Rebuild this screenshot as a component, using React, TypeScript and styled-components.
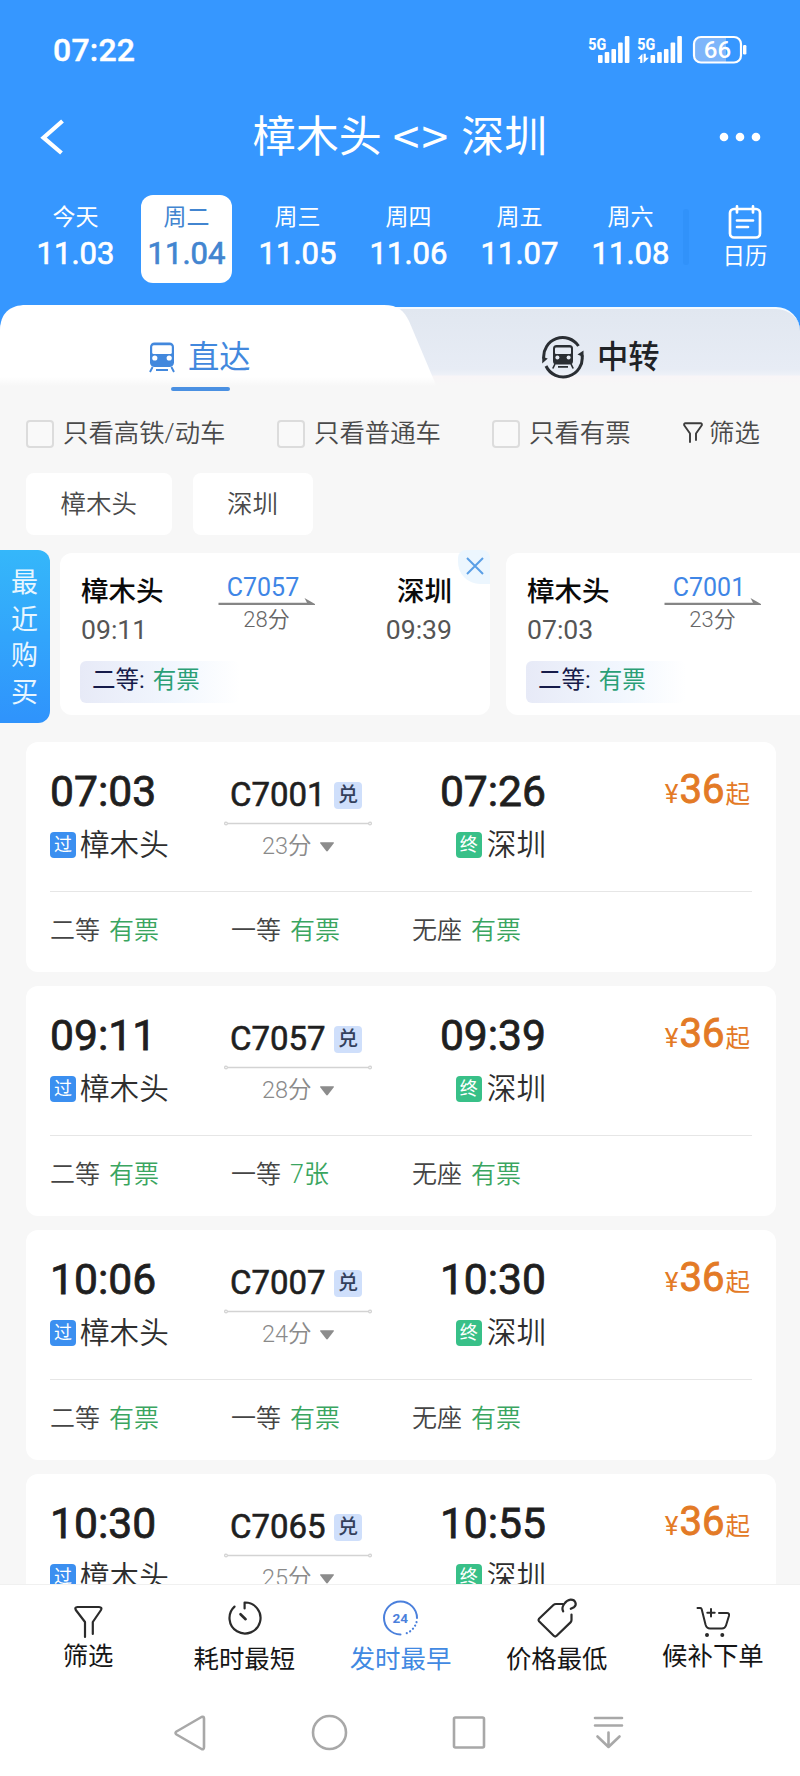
import React from "react";
import styled, { createGlobalStyle } from "styled-components";

const GlobalStyle = createGlobalStyle`
  * { box-sizing: border-box; }
  body {
    margin: 0;
    background: #f7f7f7;
    font-family: Roboto, "Noto Sans CJK SC", sans-serif;
    color: #222;
  }
  svg { display: block; flex: none; }
`;

const Screen = styled.div`
  width: 800px;
  height: 1776px;
  overflow: hidden;
  display: flex;
  flex-direction: column;
  background: #f7f7f7;
`;

/* ---------- header ---------- */

const Header = styled.header`
  background: #3697ff;
  color: #fff;
  flex: none;
`;

const StatusBar = styled.div`
  height: 98px;
  padding: 1px 52px 0 53px;
  display: flex;
  align-items: center;
  justify-content: space-between;
`;

const Clock = styled.span`
  font-size: 32px;
  font-weight: 500;
  line-height: 40px;
  letter-spacing: 0.2px;
  -webkit-text-stroke: 0.4px currentColor;
`;

const StatusIcons = styled.div`
  display: flex;
  align-items: center;
`;

const TitleBar = styled.div`
  height: 76px;
  padding: 1px 38px 0;
  display: grid;
  grid-template-columns: 60px 1fr 60px;
  align-items: center;
`;

const MoreWrap = styled.div`
  display: flex;
  justify-content: flex-end;
`;

const Title = styled.h1`
  margin: 0;
  padding-top: 1px;
  font-size: 43px;
  font-weight: 400;
  line-height: 60px;
  text-align: center;
  white-space: nowrap;
  display: flex;
  justify-content: center;
  gap: 11px;
`;

const Swap = styled.span`
  margin-top: -3px;
  font-size: 48px;
  letter-spacing: 2px;
  font-family: "Noto Sans CJK SC", sans-serif;
`;

const DateBar = styled.div`
  height: 131px;
  padding: 21px 0 0 20px;
  display: flex;
`;

const DateCell = styled.div<{ $active?: boolean }>`
  width: 91px;
  height: 88px;
  margin: 0 10px;
  padding-top: 7px;
  border-radius: 12px;
  display: flex;
  flex-direction: column;
  align-items: center;
  background: ${(p) => (p.$active ? "#fff" : "transparent")};
  color: ${(p) => (p.$active ? "#4285d0" : "#fff")};
`;

const Weekday = styled.span`
  font-size: 23px;
  line-height: 32px;
`;

const DayNumber = styled.span`
  font-size: 31px;
  font-weight: 400;
  line-height: 39px;
  -webkit-text-stroke: 0.7px currentColor;
`;

const DateShade = styled.div`
  width: 6px;
  height: 56px;
  margin: 14px 0 0 -3px;
  border-radius: 3px;
  background: #3192fa;
`;

const CalendarButton = styled.div`
  width: 60px;
  margin-left: 26px;
  padding-top: 10px;
  display: flex;
  flex-direction: column;
  align-items: center;
  font-size: 22.5px;
  line-height: 32px;
`;

/* ---------- tabs ---------- */

const TabsWrap = styled.div`
  flex: none;
  height: 90px;
  background: linear-gradient(#3697ff 50%, #f7f7f7 50%);
`;

const Tabs = styled.div`
  position: relative;
  height: 90px;
  display: grid;
  grid-template-columns: 400px 400px;
  &::before {
    content: "";
    position: absolute;
    inset: 2px 0 0 0;
    border-radius: 24px 24px 0 0;
    border-top: 2px solid #f4faff;
    background: linear-gradient(#e1e7f0 0, #e7ecf5 60px, #eef1f8 66px, #f8f5f7 67px, #f7f7f7 76px);
  }
  &::after {
    content: "";
    position: absolute;
    left: 0;
    top: 0;
    width: 440px;
    height: 82px;
    background: linear-gradient(#fff 72px, #f7f7f7 81px);
    clip-path: path("M0 82 V26 C0 8 10 0 26 0 H384 C398 0 404 6 409 16 L436 80 V82 Z");
  }
`;

const Tab = styled.div<{ $active?: boolean }>`
  position: relative;
  z-index: 1;
  height: 90px;
  padding: ${(p) => (p.$active ? "33px 0 0 149px" : "33px 0 0 141px")};
  display: flex;
  align-items: flex-start;
  gap: ${(p) => (p.$active ? "13px" : "12px")};
  font-size: 31.3px;
  font-weight: ${(p) => (p.$active ? 400 : 500)};
  line-height: 40px;
  color: ${(p) => (p.$active ? "#4288dd" : "#1f2226")};
  ${(p) =>
    p.$active &&
    `&::after {
      content: "";
      position: absolute;
      left: 171px;
      top: 82px;
      width: 59px;
      height: 4px;
      border-radius: 2px;
      background: #4a90e2;
    }`}
`;

const TabIcon = styled.span<{ $top: number }>`
  margin-top: ${(p) => p.$top}px;
`;

/* ---------- filters ---------- */

const Filters = styled.div`
  flex: none;
  height: 78px;
  padding: 0 40px 0 26px;
  display: flex;
  align-items: center;
  font-size: 25.4px;
  font-weight: 350;
  line-height: 36px;
  color: #4a4a4a;
  white-space: nowrap;
`;

const CheckItem = styled.div<{ $width: number }>`
  width: ${(p) => p.$width}px;
  display: flex;
  align-items: center;
  gap: 9px;
`;

const Checkbox = styled.span`
  width: 28px;
  height: 28px;
  flex: none;
  border: 2px solid #dcdcdc;
  border-radius: 4px;
  background: #f9f9f9;
`;

const FilterText = styled.span`
  margin-top: -2px;
`;

const FilterButton = styled.div`
  display: flex;
  align-items: center;
  gap: 6px;
  margin-top: -2px;
`;

const Chips = styled.div`
  flex: none;
  display: flex;
  gap: 21px;
  padding-left: 26px;
`;

const Chip = styled.div`
  height: 62px;
  padding: 0 34.5px;
  border-radius: 8px;
  background: #fff;
  font-size: 25.5px;
  font-weight: 350;
  line-height: 62px;
  color: #4a4a4a;
`;

/* ---------- recent purchases ---------- */

const Recent = styled.section`
  flex: none;
  height: 173px;
  margin-top: 15px;
  display: flex;
  overflow: hidden;
`;

const RecentTag = styled.div`
  width: 50px;
  flex: none;
  padding: 15px 0 0 11px;
  border-radius: 0 12px 12px 0;
  background: linear-gradient(#35b7fa, #2f93fc);
  color: #e8f6ff;
  font-size: 27px;
  line-height: 36.7px;
  display: flex;
  flex-direction: column;
`;

const RecentCard = styled.article<{ $gap: number }>`
  position: relative;
  width: 430px;
  height: 162px;
  flex: none;
  margin: 3px 0 0 ${(p) => p.$gap}px;
  padding: 19px 38px 0 21px;
  border-radius: 12px;
  background: #fff;
`;

const RecentRoute = styled.div`
  display: flex;
  justify-content: space-between;
  height: 89px;
`;

const RecentStop = styled.div<{ $end?: boolean }>`
  width: 137px;
  display: flex;
  flex-direction: column;
  align-items: ${(p) => (p.$end ? "flex-end" : "flex-start")};
`;

const RecentStation = styled.span`
  font-size: 27.5px;
  font-weight: 500;
  line-height: 40px;
  color: #0a0a0a;
`;

const RecentTime = styled.span`
  font-size: 26.6px;
  font-weight: 400;
  line-height: 36px;
  color: #555;
`;

const RecentTrain = styled.div`
  width: 96px;
  display: flex;
  flex-direction: column;
  align-items: center;
  font-size: 22px;
  font-weight: 350;
  line-height: 28px;
  color: #666;
`;

const RecentCode = styled.span`
  font-size: 25px;
  font-weight: 400;
  line-height: 31px;
  margin: 0 0 -6px -7px;
  color: #3f86e6;
`;

const RecentSeat = styled.div`
  width: 160px;
  height: 42px;
  margin-left: -1px;
  padding-left: 12px;
  border-radius: 6px;
  background: linear-gradient(90deg, #e7eaf7, #f2f7fe 60%, #fff);
  display: flex;
  gap: 8px;
  font-size: 23.5px;
  line-height: 39px;
  color: #161b4a;
`;

const RecentStatus = styled.span`
  color: #2a9f76;
`;

const CloseBadge = styled.div`
  position: absolute;
  right: 0;
  top: -3px;
  width: 32px;
  height: 34px;
  border-radius: 8px 8px 0 22px;
  background: #ecf6fe;
  display: flex;
  align-items: center;
  justify-content: center;
  padding: 0 0 2px 2px;
`;

/* ---------- train list ---------- */

const TrainList = styled.main`
  flex: none;
  height: 842px;
  margin-top: 19px;
  padding: 0 24px 0 26px;
  overflow: hidden;
  display: flex;
  flex-direction: column;
  gap: 14px;
`;

const TrainCard = styled.article`
  flex: none;
  height: 230px;
  padding: 0 24px;
  border-radius: 12px;
  background: #fff;
`;

const Trip = styled.div`
  height: 149px;
  display: grid;
  grid-template-columns: 174px 148px 174px 1fr;
`;

const StopColumn = styled.div<{ $end?: boolean }>`
  padding-top: 24px;
  display: flex;
  flex-direction: column;
  gap: 9px;
  align-items: ${(p) => (p.$end ? "flex-end" : "flex-start")};
`;

const StopTime = styled.span`
  font-size: 42.6px;
  font-weight: 400;
  line-height: 50px;
  color: #1f1f1f;
  -webkit-text-stroke: 0.8px currentColor;
`;

const StopName = styled.div<{ $gap: number }>`
  display: flex;
  align-items: center;
  gap: ${(p) => p.$gap}px;
  font-size: 29.6px;
  font-weight: 350;
  line-height: 40px;
  color: #2e2e2e;
`;

const StopBadge = styled.span<{ $tone: string }>`
  width: 26px;
  height: 26px;
  border-radius: 4px;
  background: ${(p) => p.$tone};
  color: #fff;
  font-size: 18px;
  font-weight: 400;
  line-height: 26px;
  text-align: center;
`;

const TrainColumn = styled.div`
  padding-top: 33px;
  display: flex;
  flex-direction: column;
`;

const CodeRow = styled.div`
  height: 40px;
  padding-left: 6px;
  display: flex;
  align-items: center;
`;

const Code = styled.span`
  width: 104px;
  font-size: 33px;
  font-weight: 400;
  line-height: 40px;
  color: #1f1f1f;
  -webkit-text-stroke: 0.6px currentColor;
`;

const Redeem = styled.span`
  width: 28px;
  height: 27px;
  border-radius: 4px;
  background: #cfdffb;
  color: #33405c;
  font-size: 20px;
  font-weight: 500;
  line-height: 26px;
  text-align: center;
`;

const Duration = styled.div`
  height: 32px;
  padding-left: 38px;
  display: flex;
  align-items: center;
  gap: 7px;
  font-size: 23.5px;
  font-weight: 350;
  line-height: 32px;
  color: #8a8a8a;
`;

const Price = styled.div`
  padding: 23px 2px 0 0;
  display: flex;
  justify-content: flex-end;
  align-items: baseline;
  height: 78px;
  font-size: 24.5px;
  line-height: 50px;
  color: #e37a26;
`;

const Yen = styled.span`
  font-size: 26px;
  margin-right: 1px;
`;

const Amount = styled.span`
  font-size: 40px;
  font-weight: 400;
  margin-right: 1px;
  line-height: 50px;
  -webkit-text-stroke: 0.9px currentColor;
`;

const Seats = styled.div`
  height: 78px;
  border-top: 1px solid #e6e6e6;
  display: grid;
  grid-template-columns: 181px 181px 1fr;
  font-size: 25px;
  font-weight: 350;
  line-height: 77px;
  color: #454545;
`;

const Seat = styled.div`
  display: flex;
  gap: 9px;
`;

const SeatStatus = styled.span`
  color: #3aa560;
`;

/* ---------- bottom ---------- */

const SortBar = styled.nav`
  flex: none;
  height: 112px;
  padding: 11px 9px 0 10px;
  border-top: 1px solid #f0f0f0;
  background: #fff;
  display: grid;
  grid-template-columns: repeat(5, 1fr);
`;

const SortItem = styled.div<{ $active?: boolean }>`
  display: flex;
  flex-direction: column;
  align-items: center;
  color: ${(p) => (p.$active ? "#4189e2" : "#161616")};
`;

const SortLabel = styled.span<{ $offset: number }>`
  margin-top: ${(p) => p.$offset}px;
  font-size: 25.4px;
  font-weight: 400;
  line-height: 36px;
`;

const SystemNav = styled.div`
  flex: none;
  height: 80px;
  padding: 17px 0 0 170px;
  background: #fff;
  display: flex;
  gap: 99.7px;
`;

/* ---------- icons ---------- */

const SignalIcon = ({ arrows }: { arrows?: boolean }) => {
  const x = arrows ? 13.5 : 10;
  const tops = [20, 17, 14, 7.5, 1];
  return (
    <svg width={arrows ? 55 : 49} height="30" viewBox={`0 0 ${arrows ? 55 : 49} 30`} fill="#fff">
      <text x="0.3" y="14.5" fontSize="17" fontWeight="800" textLength="18" lengthAdjust="spacingAndGlyphs">
        5G
      </text>
      {tops.map((top, i) => (
        <rect key={i} x={x + i * 6.7} y={top} width="4.6" height={28 - top} rx="1" />
      ))}
      {arrows && <path d="M0.6 24 L5.4 18.8 V28 H3.2 V24 Z M6.6 18.8 H8.8 V22.8 H12 L6.6 28 Z" />}
    </svg>
  );
};

const BatteryIcon = () => (
  <svg width="56" height="30" viewBox="0 0 56 30">
    <path d="M9 3 H34 V27 H9 Q3 27 3 21 V9 Q3 3 9 3 Z" fill="#7db5fa" />
    <rect x="2" y="2" width="47" height="25.5" rx="7" fill="none" stroke="#fff" strokeWidth="2.2" />
    <rect x="51" y="10" width="3.4" height="9.5" rx="1.2" fill="#fff" />
    <text x="25.5" y="23" textAnchor="middle" fontSize="24" fontWeight="500" fill="#fff">
      66
    </text>
  </svg>
);

const BackIcon = () => (
  <svg width="30" height="40" viewBox="0 0 30 40" fill="none" stroke="#fff" strokeWidth="4.2">
    <path d="M24.5 4 L5.5 20.7 L23.5 36" />
  </svg>
);

const MoreIcon = () => (
  <svg width="44" height="10" viewBox="0 0 44 10" fill="#fff">
    <circle cx="6" cy="5" r="4.3" />
    <circle cx="22" cy="5" r="4.3" />
    <circle cx="38" cy="5" r="4.3" />
  </svg>
);

const CalendarIcon = () => (
  <svg width="36" height="35" viewBox="0 0 36 35" fill="none" stroke="#fff" strokeWidth="2.7" strokeLinecap="round">
    <rect x="3" y="4" width="30" height="28.5" rx="4" />
    <path d="M10 1.4 V7.5 M26 1.4 V7.5 M10 15.5 H26 M10 22 H21" />
  </svg>
);

const TrainIcon = () => (
  <svg width="26" height="31" viewBox="0 0 26 31">
    <rect x="1" y="0.5" width="24" height="24.5" rx="4.5" fill="#4288dd" />
    <rect x="3.2" y="3.2" width="19.6" height="8.8" rx="1.5" fill="#fff" />
    <circle cx="5.8" cy="16" r="2.6" fill="#fff" />
    <circle cx="20.2" cy="16" r="2.6" fill="#fff" />
    <path d="M3.6 25 L1 30 M22.4 25 L25 30 M7 28 H19" stroke="#4288dd" strokeWidth="1.9" />
  </svg>
);

const TransferIcon = () => (
  <svg width="44" height="44" viewBox="0 0 44 44">
    <g fill="none" stroke="#2a2e33" strokeWidth="3">
      <path d="M2.8 23.5 A19 19 0 0 1 37.5 11" />
      <path d="M41 20 A19 19 0 0 1 5 31" />
    </g>
    <path d="M1.3 22 L1.2 28.5 L6.8 23.5 Z M42.5 15.5 L42.5 22 L36.5 19.5 Z" fill="#2a2e33" />
    <rect x="12" y="10" width="20" height="19.5" rx="3.5" fill="#2a2e33" />
    <rect x="14" y="12.5" width="16" height="6.5" rx="1" fill="#e6ebf4" />
    <circle cx="16.4" cy="22.4" r="2" fill="#e6ebf4" />
    <circle cx="27.6" cy="22.4" r="2" fill="#e6ebf4" />
    <path d="M14 29 L11.8 33.5 M30 29 L32.2 33.5 M17 31.8 H27" stroke="#2a2e33" strokeWidth="1.7" />
  </svg>
);

const SmallFunnelIcon = () => (
  <svg width="20" height="22" viewBox="0 0 20 22" fill="none" stroke="#3c3c3c" strokeWidth="1.9" strokeLinecap="round" strokeLinejoin="round">
    <path d="M7 20 V11.5 L1.2 3.2 Q0.8 1.3 2.5 1.2 H17.5 Q19.2 1.3 18.8 3.2 L13 11.5 V18" />
  </svg>
);

const HalfArrow = () => (
  <svg width="97" height="9" viewBox="0 0 97 9">
    <path d="M0.5 5.8 H89 L86.5 1 L97 7 V8 H0.5 Z" fill="#858585" />
  </svg>
);

const CloseIcon = () => (
  <svg width="18" height="18" viewBox="0 0 18 18" stroke="#5a9fe6" strokeWidth="2">
    <path d="M1 1 L17 17 M17 1 L1 17" />
  </svg>
);

const RouteLine = () => (
  <svg width="148" height="15" viewBox="0 0 148 15" fill="none" stroke="#d3d3d3" strokeWidth="1.3">
    <path d="M3.5 8.5 H144.5" />
    <circle cx="2" cy="8.5" r="1.4" />
    <circle cx="146" cy="8.5" r="1.4" />
  </svg>
);

const DownTriangle = () => (
  <svg width="16" height="11" viewBox="0 0 16 11">
    <path d="M1.8 1.2 H14.2 Q15.6 1.2 14.6 2.6 L9 9.8 Q8 11 7 9.8 L1.4 2.6 Q0.4 1.2 1.8 1.2 Z" fill="#8c8c8c" />
  </svg>
);

const sortIconProps = {
  width: 44,
  height: 44,
  viewBox: "0 0 44 44",
  fill: "none",
  stroke: "#2b2b2b",
  strokeWidth: 2.2,
  strokeLinecap: "round" as const,
  strokeLinejoin: "round" as const,
};

const FunnelIcon = () => (
  <svg {...sortIconProps}>
    <path d="M19 41 V26 L9.8 14 Q8.3 11.2 11.5 11 H33 Q36.5 11.2 35 14 L26.8 26 V38" />
  </svg>
);

const TimerIcon = () => (
  <svg {...sortIconProps}>
    <path d="M22.6 12.5 V6.5 A15.5 15.5 0 1 1 12.5 10.6" />
    <path d="M18.5 18.2 L23.6 23.2" strokeWidth="2.6" />
  </svg>
);

const EarliestIcon = () => (
  <svg {...sortIconProps} stroke="#4b80dc" strokeWidth="2">
    <path d="M39 22 A16.5 16.5 0 1 0 22.5 38.5" />
    <path d="M38.5 26 A16.5 16.5 0 0 1 26 38" strokeDasharray="0.1 3.7" strokeWidth="2.2" />
    <text x="22.3" y="27.2" textAnchor="middle" fontSize="13.5" fontWeight="700" fill="#4b80dc" stroke="none">
      24
    </text>
  </svg>
);

const PriceTagIcon = () => (
  <svg {...sortIconProps}>
    <path d="M28 8 H21 Q19.5 8 18.4 9 L4 22.8 Q3 24 4 25.2 L19 40 Q20.2 41 21.4 40 L35.5 26.4 Q36.5 25.4 36.5 24 V18.5" />
    <path d="M28.2 15.4 C25.5 11 31 4 35.6 3.6 C40.5 3.4 42.3 8.5 39 11.2 L35.8 12.8" />
  </svg>
);

const CartIcon = () => (
  <svg {...sortIconProps} strokeWidth="2">
    <path d="M6.5 12 H9.4 Q10.4 12 10.7 13.2 L14.5 28.5 Q15.6 32.5 19 32.5 H31 Q34 32.5 35 29.5 L38 19.8 Q38.5 17 36 17 H28" />
    <path d="M20 13 V20.5 M16.3 16.8 H23.7" />
    <circle cx="16" cy="39" r="1.2" fill="#2b2b2b" strokeWidth="1.6" />
    <circle cx="31.3" cy="39" r="1.2" fill="#2b2b2b" strokeWidth="1.6" />
  </svg>
);

const navIconProps = {
  width: 40,
  height: 40,
  viewBox: "0 0 40 40",
  fill: "none",
  stroke: "#a8a8a8",
  strokeWidth: 2.6,
  strokeLinejoin: "round" as const,
  strokeLinecap: "round" as const,
};

/* ---------- data ---------- */

const dates = [
  ["今天", "11.03"],
  ["周二", "11.04"],
  ["周三", "11.05"],
  ["周四", "11.06"],
  ["周五", "11.07"],
  ["周六", "11.08"],
];

const recents = [
  { from: "樟木头", to: "深圳", dep: "09:11", arr: "09:39", code: "C7057", mins: "28分", gap: 10 },
  { from: "樟木头", dep: "07:03", code: "C7001", mins: "23分", gap: 16 },
];

const trains = [
  { dep: "07:03", arr: "07:26", code: "C7001", mins: "23分", seats: [["二等", "有票"], ["一等", "有票"], ["无座", "有票"]] },
  { dep: "09:11", arr: "09:39", code: "C7057", mins: "28分", seats: [["二等", "有票"], ["一等", "7张"], ["无座", "有票"]] },
  { dep: "10:06", arr: "10:30", code: "C7007", mins: "24分", seats: [["二等", "有票"], ["一等", "有票"], ["无座", "有票"]] },
  { dep: "10:30", arr: "10:55", code: "C7065", mins: "25分", seats: [] },
];

const sorts = [
  { label: "筛选", icon: <FunnelIcon />, offset: -2 },
  { label: "耗时最短", icon: <TimerIcon />, offset: 1 },
  { label: "发时最早", icon: <EarliestIcon />, offset: 1, active: true },
  { label: "价格最低", icon: <PriceTagIcon />, offset: 1 },
  { label: "候补下单", icon: <CartIcon />, offset: -2 },
];

export default function App() {
  return (
    <>
      <GlobalStyle />
      <Screen>
        <Header>
          <StatusBar>
            <Clock>07:22</Clock>
            <StatusIcons>
              <SignalIcon />
              <SignalIcon arrows />
              <BatteryIcon />
            </StatusIcons>
          </StatusBar>
          <TitleBar>
            <BackIcon />
            <Title>
              <span>樟木头</span>
              <Swap>&lt;&gt;</Swap>
              <span>深圳</span>
            </Title>
            <MoreWrap>
              <MoreIcon />
            </MoreWrap>
          </TitleBar>
          <DateBar>
            {dates.map(([day, num], i) => (
              <DateCell key={num} $active={i === 1}>
                <Weekday>{day}</Weekday>
                <DayNumber>{num}</DayNumber>
              </DateCell>
            ))}
            <DateShade />
            <CalendarButton>
              <CalendarIcon />
              日历
            </CalendarButton>
          </DateBar>
        </Header>

        <TabsWrap>
          <Tabs>
            <Tab $active>
              <TabIcon $top={4}>
                <TrainIcon />
              </TabIcon>
              直达
            </Tab>
            <Tab>
              <TabIcon $top={-3}>
                <TransferIcon />
              </TabIcon>
              中转
            </Tab>
          </Tabs>
        </TabsWrap>

        <Filters>
          <CheckItem $width={251}>
            <Checkbox />
            <FilterText>只看高铁/动车</FilterText>
          </CheckItem>
          <CheckItem $width={215}>
            <Checkbox />
            <FilterText>只看普通车</FilterText>
          </CheckItem>
          <CheckItem $width={191}>
            <Checkbox />
            <FilterText>只看有票</FilterText>
          </CheckItem>
          <FilterButton>
            <SmallFunnelIcon />
            筛选
          </FilterButton>
        </Filters>

        <Chips>
          <Chip>樟木头</Chip>
          <Chip>深圳</Chip>
        </Chips>

        <Recent>
          <RecentTag>
            {"最近购买".split("").map((c) => (
              <span key={c}>{c}</span>
            ))}
          </RecentTag>
          {recents.map((r, i) => (
            <RecentCard key={r.code} $gap={r.gap}>
              <RecentRoute>
                <RecentStop>
                  <RecentStation>{r.from}</RecentStation>
                  <RecentTime>{r.dep}</RecentTime>
                </RecentStop>
                <RecentTrain>
                  <RecentCode>{r.code}</RecentCode>
                  <HalfArrow />
                  <span>{r.mins}</span>
                </RecentTrain>
                <RecentStop $end>
                  {r.to && <RecentStation>{r.to}</RecentStation>}
                  {r.arr && <RecentTime>{r.arr}</RecentTime>}
                </RecentStop>
              </RecentRoute>
              <RecentSeat>
                <span>二等:</span>
                <RecentStatus>有票</RecentStatus>
              </RecentSeat>
              {i === 0 && (
                <CloseBadge>
                  <CloseIcon />
                </CloseBadge>
              )}
            </RecentCard>
          ))}
        </Recent>

        <TrainList>
          {trains.map((t) => (
            <TrainCard key={t.code}>
              <Trip>
                <StopColumn>
                  <StopTime>{t.dep}</StopTime>
                  <StopName $gap={4}>
                    <StopBadge $tone="#3b8ff0">过</StopBadge>
                    樟木头
                  </StopName>
                </StopColumn>
                <TrainColumn>
                  <CodeRow>
                    <Code>{t.code}</Code>
                    <Redeem>兑</Redeem>
                  </CodeRow>
                  <RouteLine />
                  <Duration>
                    {t.mins}
                    <DownTriangle />
                  </Duration>
                </TrainColumn>
                <StopColumn $end>
                  <StopTime>{t.arr}</StopTime>
                  <StopName $gap={5}>
                    <StopBadge $tone="#38c088">终</StopBadge>
                    深圳
                  </StopName>
                </StopColumn>
                <Price>
                  <Yen>¥</Yen>
                  <Amount>36</Amount>起
                </Price>
              </Trip>
              <Seats>
                {t.seats.map(([kind, status]) => (
                  <Seat key={kind}>
                    {kind}
                    <SeatStatus>{status}</SeatStatus>
                  </Seat>
                ))}
              </Seats>
            </TrainCard>
          ))}
        </TrainList>

        <SortBar>
          {sorts.map((s) => (
            <SortItem key={s.label} $active={s.active}>
              {s.icon}
              <SortLabel $offset={s.offset}>{s.label}</SortLabel>
            </SortItem>
          ))}
        </SortBar>

        <SystemNav>
          <svg {...navIconProps}>
            <path d="M6.5 18.5 L31.5 4 Q34 3 34 5.5 V34 Q34 37 31.5 36 L6.5 21.5 Q4.5 20 6.5 18.5 Z" />
          </svg>
          <svg {...navIconProps}>
            <circle cx="19.5" cy="19.5" r="16.5" />
          </svg>
          <svg {...navIconProps}>
            <rect x="5" y="4.5" width="30" height="30" rx="1.5" />
          </svg>
          <svg {...navIconProps}>
            <path d="M6 5 H33 M6 12.5 H33 M19.5 19.5 V33 M8.5 23.5 L19.5 34 L30.5 23.5" />
          </svg>
        </SystemNav>
      </Screen>
    </>
  );
}
